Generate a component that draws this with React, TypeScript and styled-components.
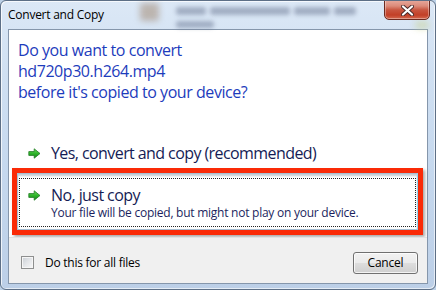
import React from "react";
import styled, { createGlobalStyle } from "styled-components";

const Global = createGlobalStyle`
  html, body { margin: 0; padding: 0; width: 436px; height: 290px; overflow: hidden; background: #bcd0e6; }
  #root { width: 436px; height: 290px; }
`;

const uiFont = `"Open Sans", "Noto Sans", "Liberation Sans", sans-serif`;

const Window = styled.div`
  position: relative;
  width: 436px;
  height: 290px;
  box-sizing: border-box;
  display: flex;
  flex-direction: column;
  overflow: hidden;
  font-family: ${uiFont};
  border: 1px solid #5d6f86;
  border-radius: 6px;
  background:
    linear-gradient(180deg, #dce8f6 0%, #d0e0f2 25%, #c5d8ee 60%, #bccfe7 100%);
  box-shadow: inset 1px 1px 0 rgba(255, 255, 255, 0.75), inset -1px -1px 0 rgba(255, 255, 255, 0.6);
`;

const TitleBar = styled.div`
  position: relative;
  height: 28px;
  flex: none;
  display: flex;
  align-items: center;
  padding-left: 7px;
`;

const Title = styled.span`
  position: relative;
  z-index: 2;
  font-size: 12px;
  line-height: 28px;
  letter-spacing: -0.25px;
  color: #000;
`;

const Blur = styled.div<{ $l: number; $t: number; $w: number; $h: number; $c: string; $b?: number }>`
  position: absolute;
  left: ${(p) => p.$l}px;
  top: ${(p) => p.$t}px;
  width: ${(p) => p.$w}px;
  height: ${(p) => p.$h}px;
  background: ${(p) => p.$c};
  border-radius: 3px;
  filter: blur(${(p) => p.$b ?? 3}px);
  z-index: 1;
`;

const CloseButton = styled.div`
  position: absolute;
  right: 5px;
  top: -3px;
  width: 46px;
  height: 22px;
  box-sizing: border-box;
  border: 1px solid #6c2a20;
  border-radius: 0 0 5px 5px;
  background: linear-gradient(180deg, #eab0a4 0%, #dc8b7a 35%, #c8553f 55%, #c23f27 80%, #d4694f 100%);
  box-shadow: inset 0 0 0 1px rgba(255, 255, 255, 0.35);
  display: flex;
  align-items: center;
  justify-content: center;
  padding-top: 3px;
  z-index: 3;
`;

const Client = styled.div`
  flex: none;
  margin: 0 7px;
  height: 255px;
  box-sizing: border-box;
  border: 1px solid #8596ab;
  display: flex;
  flex-direction: column;
  background: #fff;
`;

const Content = styled.div`
  flex: 1;
  background: #fff;
  padding: 10px 9px 2px 9px;
  display: flex;
  flex-direction: column;
`;

const Instruction = styled.div`
  font-size: 16px;
  line-height: 21px;
  letter-spacing: -0.45px;
  color: #1d3cbc;
  margin-bottom: 28px;
`;

const Highlight = styled.div`
  margin: 0 -5px 0 -6px;
  border: 5px solid #fa2a06;
  box-shadow: 2px 2px 3px rgba(0, 0, 0, 0.35);
`;

const CommandLink = styled.div<{ $focused?: boolean }>`
  position: relative;
  display: grid;
  grid-template-columns: 13px 1fr;
  column-gap: 10px;
  padding: ${(p) => (p.$focused ? "11px 10px 9px 10px" : "12px 10px 4px 10px")};
  border: ${(p) => (p.$focused ? "1px solid #a6bed2" : "none")};
  border-right-color: #8fd3ee;
  background: #fff;
  box-shadow: ${(p) => (p.$focused ? "inset 0 2px 2px rgba(90, 110, 130, 0.35)" : "none")};
  color: #151c55;
  &::after {
    content: "";
    display: ${(p) => (p.$focused ? "block" : "none")};
    position: absolute;
    top: 4px;
    left: 1px;
    right: 1px;
    bottom: 2px;
    border: 1px dotted #222;
  }
`;

const ArrowBox = styled.div`
  height: 21px;
  display: flex;
  align-items: center;
`;

const LinkText = styled.div`
  display: flex;
  flex-direction: column;
`;

const LinkTitle = styled.span`
  font-size: 16px;
  line-height: 21px;
  letter-spacing: -0.58px;
`;

const LinkNote = styled.span`
  font-size: 12px;
  line-height: 14px;
  letter-spacing: -0.25px;
  color: #1c1f5e;
`;

const Footer = styled.div`
  flex: none;
  height: 46px;
  box-sizing: border-box;
  background: #f0f0f0;
  border-top: 1px solid #e2e2e2;
  display: flex;
  align-items: center;
  justify-content: space-between;
  padding: 4px 9px 0 12px;
`;

const CheckRow = styled.label`
  display: flex;
  align-items: center;
  gap: 11px;
  font-size: 12px;
  letter-spacing: -0.25px;
  color: #000;
`;

const CheckBox = styled.span`
  width: 13px;
  height: 13px;
  box-sizing: border-box;
  border: 1px solid #8e8f8f;
  background: linear-gradient(135deg, #c9ced4 0%, #e4e6e9 50%, #f8f8f8 100%);
  box-shadow: inset 0 0 0 1px #f6f6f6;
`;

const Button = styled.button`
  width: 65px;
  height: 22px;
  box-sizing: border-box;
  border: 1px solid #707070;
  border-radius: 3px;
  background: linear-gradient(180deg, #f2f2f2 0%, #ebebeb 48%, #dddddd 52%, #cfcfcf 100%);
  box-shadow: inset 0 0 0 1px rgba(255, 255, 255, 0.75);
  font-family: ${uiFont};
  font-size: 12px;
  letter-spacing: -0.2px;
  color: #000;
  padding: 0;
`;

const GreenArrow = () => (
  <svg width="13" height="11" viewBox="0 0 13 11">
    <defs>
      <linearGradient id="ga" x1="0" y1="0" x2="0" y2="1">
        <stop offset="0" stopColor="#6fdc5e" />
        <stop offset="0.5" stopColor="#2fb52a" />
        <stop offset="1" stopColor="#17861a" />
      </linearGradient>
    </defs>
    <path
      d="M0.8 3.6 H6.2 V0.8 L12 5.5 L6.2 10.2 V7.4 H0.8 Z"
      fill="url(#ga)"
      stroke="#1f7a22"
      strokeWidth="0.8"
      strokeLinejoin="round"
    />
  </svg>
);

const CloseGlyph = () => (
  <svg width="13" height="11" viewBox="0 0 13 11">
    <path d="M2 1.5 L11 9.5 M11 1.5 L2 9.5" stroke="#4a2a2a" strokeWidth="4" strokeLinecap="round" />
    <path d="M2 1.5 L11 9.5 M11 1.5 L2 9.5" stroke="#ffffff" strokeWidth="2.2" strokeLinecap="round" />
  </svg>
);

const blurWords: Array<[number, number, number, number]> = [
  [175, 6, 30, 8],
  [209, 6, 80, 8],
  [293, 6, 36, 8],
  [333, 6, 22, 8],
  [175, 20, 38, 7],
];

export default function App() {
  return (
    <>
      <Global />
      <Window>
        <TitleBar>
          <Blur $l={139} $t={2} $w={19} $h={18} $c="rgba(150, 120, 90, 0.45)" />
          {blurWords.map(([l, t, w, h], i) => (
            <Blur key={i} $l={l} $t={t} $w={w} $h={h} $b={2.2} $c="rgba(70, 85, 115, 0.38)" />
          ))}
          <Blur $l={414} $t={20} $w={14} $h={8} $c="rgba(200, 210, 140, 0.5)" />
          <Title>Convert and Copy</Title>
          <CloseButton>
            <CloseGlyph />
          </CloseButton>
        </TitleBar>
        <Client>
          <Content>
            <Instruction>
              Do you want to convert
              <br />
              hd720p30.h264.mp4
              <br />
              before it's copied to your device?
            </Instruction>
            <CommandLink>
              <ArrowBox>
                <GreenArrow />
              </ArrowBox>
              <LinkText>
                <LinkTitle>Yes, convert and copy (recommended)</LinkTitle>
              </LinkText>
            </CommandLink>
            <Highlight>
              <CommandLink $focused>
                <ArrowBox>
                  <GreenArrow />
                </ArrowBox>
                <LinkText>
                  <LinkTitle>No, just copy</LinkTitle>
                  <LinkNote>Your file will be copied, but might not play on your device.</LinkNote>
                </LinkText>
              </CommandLink>
            </Highlight>
          </Content>
          <Footer>
            <CheckRow>
              <CheckBox />
              Do this for all files
            </CheckRow>
            <Button>Cancel</Button>
          </Footer>
        </Client>
      </Window>
    </>
  );
}
